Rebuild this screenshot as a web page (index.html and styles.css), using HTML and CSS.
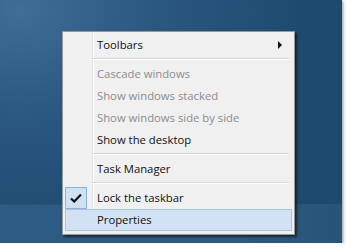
FILE: index.html
```html
<!DOCTYPE html>
<html lang="en">
<head>
  <meta charset="UTF-8" />
  <title>Taskbar menu</title>
  <link rel="stylesheet" href="styles.css">
</head>
<body>
  <div class="screen">
    <div class="desktop"></div>
    <div class="taskbar"></div>

    <!-- context menu -->
    <ul class="menu">
      <li class="item">Toolbars<span class="arrow"></span></li>
      <li class="sep"></li>
      <li class="item off">Cascade windows</li>
      <li class="item off">Show windows stacked</li>
      <li class="item off">Show windows side by side</li>
      <li class="item">Show the desktop</li>
      <li class="sep"></li>
      <li class="item">Task Manager</li>
      <li class="sep"></li>
      <li class="item checked">
        <span class="check">
          <svg width="12" height="10" viewBox="0 0 12 10"><path d="M1 5.5 L4.2 8.5 L11 1.5" fill="none" stroke="#111" stroke-width="2.2"/></svg>
        </span>Lock the taskbar
      </li>
      <li class="item hot">Properties</li>
    </ul>
  </div>
</body>
</html>
```

FILE: styles.css
```css
body {
  margin: 0;
  background: #fff;
  font-family: 'Open Sans', 'Noto Sans', sans-serif;
}
.screen {
  position: relative;
  width: 342px;
  height: 243px;
  display: flex;
  flex-direction: column;
  box-shadow: 1px 1px 3px rgba(0, 0, 0, 0.45);
}
.desktop {
  flex: 1;
  background: radial-gradient(ellipse 280px 220px at 20px 10px, #3e6d95 0%, #2c5981 45%, #1f4a70 100%);
}
.taskbar {
  height: 38px;
  background: linear-gradient(to right, #2e5b81, #2d5a80 70%, #295479);
  border-top: 1px solid #2a5376;
}

/* menu */
.menu {
  position: absolute;
  left: 62px;
  top: 31px;
  width: 229px;
  margin: 0;
  padding: 2px 0 3px 2px;
  list-style: none;
  background: #f0f0f0;
  border: 1px solid #979797;
  box-shadow: 2px 2px 2px rgba(0, 0, 0, 0.55);
  font-size: 11.3px;
  color: #111;
}
.menu::before {
  content: '';
  position: absolute;
  left: 29px;
  top: 1px;
  bottom: 1px;
  width: 1px;
  background: #e2e2e2;
  border-right: 1px solid #fff;
}
.item {
  position: relative;
  height: 20px;
  line-height: 20px;
  padding-left: 31px;
  width: 194px;
  border: 1px solid transparent;
}
.item.off {
  color: #8c8c8c;
}
.item.hot {
  background: #d3e2f3;
  border-color: #a9c3e0;
}
.arrow {
  position: absolute;
  right: 9px;
  top: 6px;
  border-left: 4px solid #111;
  border-top: 4px solid transparent;
  border-bottom: 4px solid transparent;
}
.check {
  position: absolute;
  left: -1px;
  top: -1px;
  width: 20px;
  height: 20px;
  background: #cfe2f3;
  border: 1px solid #8db3d9;
  display: flex;
  align-items: center;
  justify-content: center;
}
.sep {
  height: 7px;
  margin-left: 27px;
  margin-right: 5px;
  position: relative;
}
.sep::after {
  content: '';
  position: absolute;
  left: 0;
  right: 0;
  top: 2px;
  height: 1px;
  background: #d7d7d7;
  border-bottom: 1px solid #fff;
}
```
